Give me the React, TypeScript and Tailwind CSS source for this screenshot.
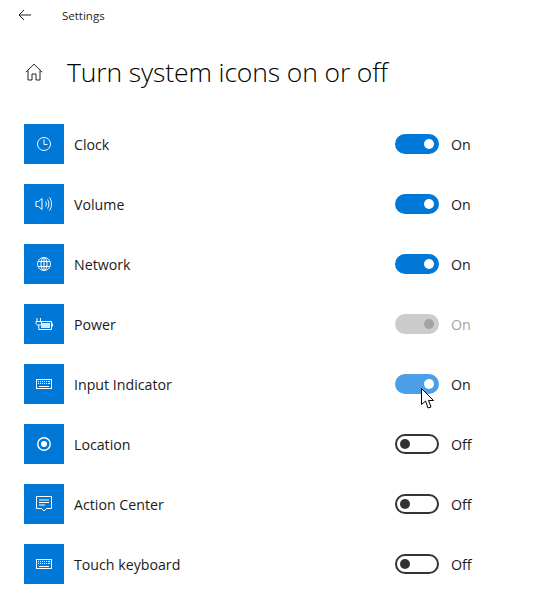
import React from "react";

type ToggleState = "on" | "off" | "disabled" | "hover";

const stroke = {
  fill: "none",
  stroke: "white",
  strokeWidth: 1,
};

function ClockIcon() {
  return (
    <svg width="16" height="16" viewBox="0 0 16 16" {...stroke}>
      <circle cx="8" cy="8" r="6.5" />
      <path d="M8 3.5V8.5H11.5" />
    </svg>
  );
}

function VolumeIcon() {
  return (
    <svg width="18" height="16" viewBox="0 0 18 16" {...stroke}>
      <path d="M1 5.5H3.5L7 2.5V13.5L3.5 10.5H1Z" />
      <path d="M10.5 5.5C11.6 7 11.6 9 10.5 10.5" />
      <path d="M12.5 3.5C14.4 6.2 14.4 9.8 12.5 12.5" />
      <path d="M14.5 1.5C17.2 5.5 17.2 10.5 14.5 14.5" />
    </svg>
  );
}

function GlobeIcon() {
  return (
    <svg width="16" height="16" viewBox="0 0 16 16" {...stroke}>
      <circle cx="8" cy="8" r="6.5" />
      <ellipse cx="8" cy="8" rx="3" ry="6.5" />
      <path d="M2 5.5H14M2 10.5H14M8 1.5V14.5" />
    </svg>
  );
}

function PowerIcon() {
  return (
    <svg width="18" height="12" viewBox="0 0 18 12" {...stroke}>
      <path d="M2 0V3M5.5 0V3" />
      <path d="M1 3.5H6.5V5.5C6.5 6.5 5.5 7 3.75 7C2 7 1 6.5 1 5.5ZM3.75 7V11.5" />
      <path d="M3.75 11.5H16.5V3.5H7" />
      <rect x="6" y="5" width="9" height="5" fill="white" fillOpacity="0.85" stroke="none" />
      <path d="M17.5 5.5V8.5" />
    </svg>
  );
}

function KeyboardIcon() {
  return (
    <svg width="16" height="10" viewBox="0 0 16 10" {...stroke}>
      <rect x="0.5" y="0.5" width="15" height="9" />
      <path d="M2 2.5H3M4 2.5H5M6 2.5H7M8 2.5H9M10 2.5H11M12 2.5H14M2 4.5H3M4 4.5H5M6 4.5H7M8 4.5H9M10 4.5H11M12 4.5H14M3 7.5H13" />
    </svg>
  );
}

function LocationIcon() {
  return (
    <svg width="16" height="16" viewBox="0 0 16 16" {...stroke}>
      <circle cx="8" cy="8" r="6.25" strokeWidth="1.4" />
      <circle cx="8" cy="8" r="3" fill="white" stroke="none" />
    </svg>
  );
}

function ActionCenterIcon() {
  return (
    <svg width="16" height="17" viewBox="0 0 16 17" {...stroke}>
      <path d="M0.5 0.5H15.5V12.5H10.5L8 15L5.5 12.5H0.5Z" />
      <path d="M3 4H13M3 6.5H13M3 9H9" />
    </svg>
  );
}

function Toggle({ state }: { state: ToggleState }) {
  if (state === "off") {
    return (
      <div className="flex h-5 w-11 items-center rounded-full border-2 border-[#333333] pl-[3px]">
        <div className="h-2.5 w-2.5 rounded-full bg-[#333333]" />
      </div>
    );
  }
  const track =
    state === "disabled"
      ? "bg-[#cccccc]"
      : state === "hover"
        ? "bg-[#4c9fe6]"
        : "bg-[#0078d7]";
  const knob = state === "disabled" ? "bg-[#a3a3a3]" : "bg-white";
  return (
    <div className={`flex h-5 w-11 items-center justify-end rounded-full pr-[5px] ${track}`}>
      <div className={`h-2.5 w-2.5 rounded-full ${knob}`} />
    </div>
  );
}

function SettingRow({
  icon,
  label,
  state,
  children,
}: {
  icon: React.ReactNode;
  label: string;
  state: ToggleState;
  children?: React.ReactNode;
}) {
  return (
    <div className="flex h-10 items-center">
      <div className="flex h-10 w-10 items-center justify-center bg-[#0078d7]">{icon}</div>
      <span className="ml-2.5 w-[321px] pt-0.5 text-[14.2px] text-[#1a1a1a]">{label}</span>
      <div className="relative">
        <Toggle state={state} />
        {children}
      </div>
      <span
        className={`ml-3 pt-0.5 text-[14.2px] ${state === "disabled" ? "text-[#a6a6a6]" : "text-[#1a1a1a]"}`}
      >
        {state === "off" ? "Off" : "On"}
      </span>
    </div>
  );
}

export default function App() {
  return (
    <div
      className="flex h-[602px] w-[534px] flex-col overflow-hidden bg-white"
      style={{ fontFamily: '"Open Sans", "Noto Sans", sans-serif' }}
    >
      <header className="flex h-8 items-center pl-[18px]">
        <svg
          className="-mt-0.5"
          width="13"
          height="12"
          viewBox="0 0 13 12"
          fill="none"
          stroke="#222222"
          strokeWidth="1"
        >
          <path d="M13 6H1M6 1L1 6L6 11" />
        </svg>
        <span className="ml-[31px] text-[11.5px] text-[#1f1f1f]">Settings</span>
      </header>

      <div className="mt-5 flex h-10 items-center pl-[25px]">
        <svg width="18" height="18" viewBox="0 0 18 18" fill="none" stroke="#222222" strokeWidth="1">
          <path d="M0.8 9.2L9 1.2L17.2 9.2M3 7.5V17H7V11H11V17H15V7.5" />
        </svg>
        <h1 className="ml-[24px] pt-px text-[26.5px] font-light tracking-[-0.12px] text-black">
          Turn system icons on or off
        </h1>
      </div>

      <div className="mt-8 flex flex-col gap-5 pl-6">
        <SettingRow icon={<ClockIcon />} label="Clock" state="on" />
        <SettingRow icon={<VolumeIcon />} label="Volume" state="on" />
        <SettingRow icon={<GlobeIcon />} label="Network" state="on" />
        <SettingRow icon={<PowerIcon />} label="Power" state="disabled" />
        <SettingRow icon={<KeyboardIcon />} label="Input Indicator" state="hover">
          <svg
            className="absolute left-[26px] top-[14px]"
            width="13"
            height="22"
            viewBox="0 0 13 22"
            fill="white"
            stroke="black"
            strokeWidth="1"
          >
            <path d="M0.5 0.5V16.5L4.5 13L7 20L10 19L7.5 12.5H12.5Z" />
          </svg>
        </SettingRow>
        <SettingRow icon={<LocationIcon />} label="Location" state="off" />
        <SettingRow icon={<ActionCenterIcon />} label="Action Center" state="off" />
        <SettingRow icon={<KeyboardIcon />} label="Touch keyboard" state="off" />
      </div>
    </div>
  );
}
